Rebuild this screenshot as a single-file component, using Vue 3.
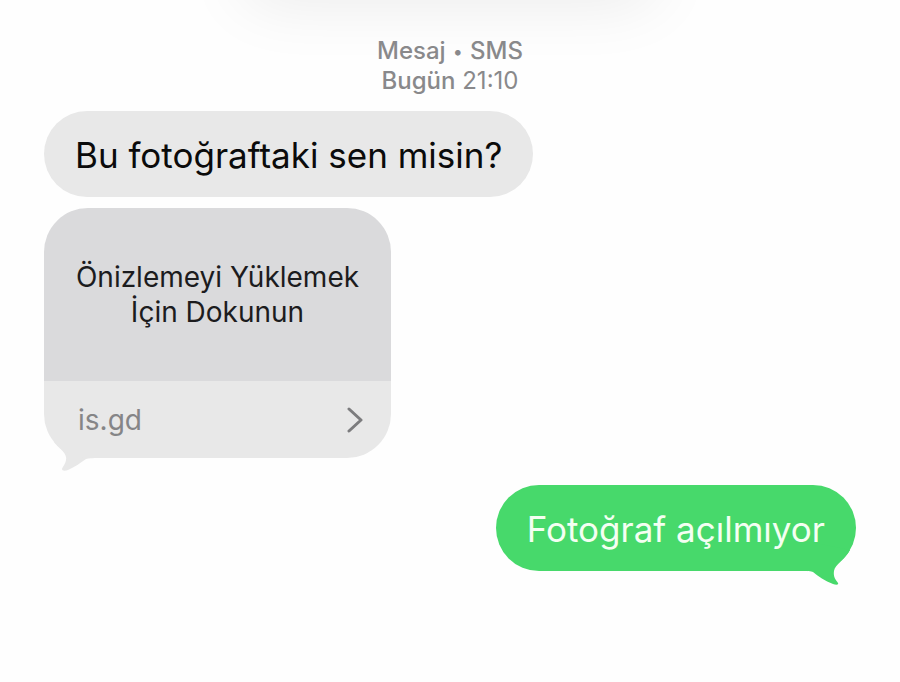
<script setup>
const incoming = 'Bu fotoğraftaki sen misin?'
const outgoing = 'Fotoğraf açılmıyor'
const link = { host: 'is.gd', href: '#' }
</script>

<template>
  <main class="conversation">
    <div class="header-shade" aria-hidden="true"></div>

    <header class="stamp">
      <div class="strong">Mesaj <span class="dot">•</span> SMS</div>
      <div><span class="strong">Bugün</span> <time>21:10</time></div>
    </header>

    <section class="messages">
      <p class="bubble received">{{ incoming }}</p>

      <a class="preview" :href="link.href">
        <span class="preview-load">Önizlemeyi Yüklemek<br />İçin Dokunun</span>
        <span class="preview-footer">
          <span>{{ link.host }}</span>
          <svg class="chevron" viewBox="0 0 16 28" aria-hidden="true">
            <path d="M2 2 L14 13 L2 24" />
          </svg>
        </span>
        <svg class="tail tail-left" viewBox="0 0 60 50" aria-hidden="true">
          <path d="M10 20 C14 26 21 29 22 35 C23 40 19 44 18 47 C18 49 21 49 24 48 C31 45 36 41 42 37 C45 36 50 36 60 36 L60 10 Z" />
        </svg>
      </a>

      <p class="bubble sent">
        {{ outgoing }}
        <svg class="tail tail-right" viewBox="0 0 60 56" aria-hidden="true">
          <path d="M54 20 C49 30 39 34 38 41 C37 47 40 50 42 53 C43 55 40 55 37 54 C29 51 22 46 17 42 C15 41 12 41 4 41 L4 10 Z" />
        </svg>
      </p>
    </section>
  </main>
</template>

<style>
body {
  margin: 0;
  background: #fefefe;
}
</style>

<style scoped>
.conversation {
  position: relative;
  overflow: hidden;
  box-sizing: border-box;
  min-height: 100vh;
  padding: 36px 44px 40px;
  background: #fefefe;
  font-family: Inter, "Liberation Sans", sans-serif;
}

.header-shade {
  position: absolute;
  top: -52px;
  left: 28%;
  right: 28%;
  height: 44px;
  border-radius: 22px;
  box-shadow: 0 0 64px 12px rgba(0, 0, 0, 0.08);
}

.stamp {
  position: relative;
  color: #89898b;
  font-size: 24px;
  line-height: 30px;
  text-align: center;
}

.strong {
  font-weight: 500;
}

.dot {
  margin: 0 1px;
  font-size: 18px;
  line-height: 1;
  vertical-align: middle;
}

.messages {
  position: relative;
  display: flex;
  flex-direction: column;
  align-items: flex-start;
  padding-top: 15px;
}

.bubble {
  position: relative;
  isolation: isolate;
  margin: 0;
  padding: 22px 31px 20px;
  border-radius: 43px;
  font-size: 35px;
  line-height: 44px;
}

.received {
  background: #e8e8e8;
  color: #0b0b0b;
}

.preview {
  position: relative;
  isolation: isolate;
  display: flex;
  flex-direction: column;
  width: 347px;
  margin-top: 11px;
  color: #1c1c1e;
  text-decoration: none;
}

.preview-load {
  padding: 52px 16px 51px;
  border-radius: 44px 44px 0 0;
  background: #dadadc;
  font-size: 28px;
  line-height: 35px;
  text-align: center;
}

.preview-footer {
  display: flex;
  align-items: center;
  justify-content: space-between;
  padding: 22px 28px 20px 34px;
  border-radius: 0 0 44px 44px;
  background: #e8e8e8;
  color: #858587;
  font-size: 28px;
  line-height: 35px;
}

.chevron {
  width: 16px;
  height: 28px;
  fill: none;
  stroke: #7c7c7e;
  stroke-width: 3;
  stroke-linecap: round;
  stroke-linejoin: round;
}

.tail {
  position: absolute;
  z-index: -1;
}

.tail-left {
  bottom: -14px;
  left: 0;
  width: 60px;
  height: 50px;
  fill: #e8e8e8;
}

.sent {
  align-self: flex-end;
  margin-top: 27px;
  background: #47d96b;
  color: #f4fff2;
}

.tail-right {
  right: 0;
  bottom: -15px;
  width: 60px;
  height: 56px;
  fill: #47d96b;
}
</style>
